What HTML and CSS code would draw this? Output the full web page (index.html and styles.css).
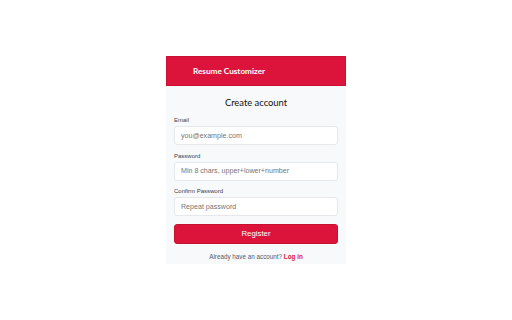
FILE: index.html
```html
<!DOCTYPE html>
<html>
<head>
<meta charset="utf-8">
<link rel="stylesheet" href="styles.css">
</head>
<body>
<div class="card">
  <div class="header"><span class="brand">Resume Customizer</span></div>
  <div class="content">
    <h1 class="title">Create account</h1>
    <div class="field">
      <label class="label">Email</label>
      <input class="input" type="text" placeholder="you@example.com">
    </div>
    <div class="field">
      <label class="label">Password</label>
      <input class="input" type="text" placeholder="Min 8 chars, upper+lower+number">
    </div>
    <div class="field">
      <label class="label">Confirm Password</label>
      <input class="input" type="text" placeholder="Repeat password">
    </div>
    <button class="btn">Register</button>
    <p class="footer">Already have an account? <a class="link">Log in</a></p>
  </div>
</div>
</body>
</html>
```
FILE: styles.css
```css
html, body {
  margin: 0;
  padding: 0;
  background: #ffffff;
}
body {
  font-family: "Liberation Sans", Arial, sans-serif;
}
.card {
  width: 180px;
  margin: 56px auto 0;
  background: #f8f9fb;
}
.header {
  height: 30px;
  box-sizing: border-box;
  background: #dc143c;
  border: 1px solid #cc1035;
  display: flex;
  align-items: center;
  padding-left: 26px;
}
.brand {
  font-family: Lato, sans-serif;
  font-weight: 700;
  font-size: 8.2px;
  color: #ffffff;
}
.content {
  padding: 10px 8px 2px;
  display: flex;
  flex-direction: column;
}
.title {
  margin: 0 0 6px;
  font-family: Lato, sans-serif;
  font-weight: 400;
  font-size: 9.4px;
  line-height: 14px;
  text-align: center;
  color: #111111;
}
.field {
  display: flex;
  flex-direction: column;
  margin-bottom: 6.5px;
}
.label {
  font-family: "Liberation Sans", Arial, sans-serif;
  font-size: 6px;
  line-height: 9px;
  margin-bottom: 1px;
  color: #374151;
}
.input {
  height: 19px;
  box-sizing: border-box;
  border: 1px solid #e6e8ec;
  border-radius: 3px;
  background: #ffffff;
  padding: 0 6px;
  font-family: "Liberation Sans", Arial, sans-serif;
  font-size: 7.1px;
  outline: none;
}
.input::placeholder {
  color: #757575;
}
.btn {
  margin-top: 1px;
  height: 20px;
  border: 1px solid #c8102f;
  border-radius: 3px;
  background: #dc143c;
  color: #ffffff;
  font-family: "Liberation Sans", Arial, sans-serif;
  font-size: 7.8px;
  padding: 0;
}
.footer {
  margin: 8px 0 0;
  font-size: 6.3px;
  line-height: 10px;
  text-align: center;
  color: #555b66;
}
.link {
  color: #dc143c;
  font-weight: 700;
}
```
